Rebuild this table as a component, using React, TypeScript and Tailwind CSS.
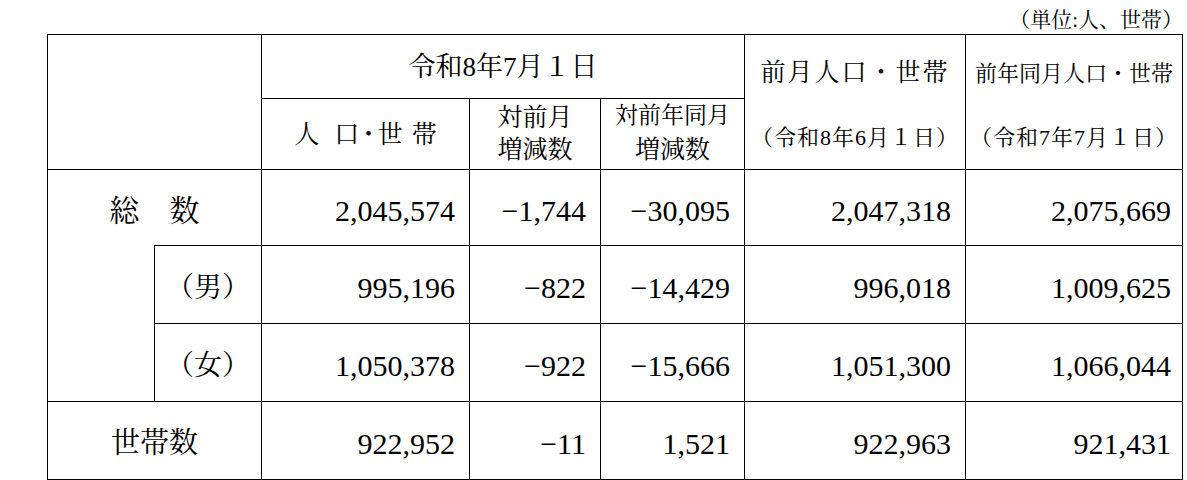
const rows = [
  { label: "総　数", values: ["2,045,574", "−1,744", "−30,095", "2,047,318", "2,075,669"] },
  { label: "（男）", values: ["995,196", "−822", "−14,429", "996,018", "1,009,625"] },
  { label: "（女）", values: ["1,050,378", "−922", "−15,666", "1,051,300", "1,066,044"] },
  { label: "世帯数", values: ["922,952", "−11", "1,521", "922,963", "921,431"] },
];

function Num({ value, last }: { value: string; last: boolean }) {
  return (
    <td className={`border border-black pt-[6px] text-right text-[30px] ${last ? "pr-[11px]" : "pr-[14px]"}`}>
      {value}
    </td>
  );
}

export default function App() {
  const [total, male, female, households] = rows;

  return (
    <div className="w-[1187px] h-[480px] bg-white text-black font-['Liberation_Serif','Noto_Serif_CJK_JP','Noto_Sans_CJK_JP',serif]">
      <div className="ml-[47px] w-[1136px] h-[34px] flex items-end justify-end pb-[1px] text-[21px] leading-[26px]">
        （単位:人、世帯）
      </div>
      <table className="ml-[47px] w-[1136px] table-fixed border-collapse">
        <colgroup>
          <col className="w-[107px]" />
          <col className="w-[107px]" />
          <col className="w-[208px]" />
          <col className="w-[131px]" />
          <col className="w-[144px]" />
          <col className="w-[221px]" />
          <col className="w-[217px]" />
        </colgroup>
        <tbody>
          <tr className="h-[64px]">
            <td rowSpan={2} colSpan={2} className="border border-black" />
            <td colSpan={3} className="border border-black pt-[2px] text-center text-[27px]">
              令和8年7月１日
            </td>
            <td rowSpan={2} className="border border-black p-0 align-top">
              <div className="flex flex-col h-[134px]">
                <div className="flex-1 flex items-center justify-center pt-[6px] text-[25px] tracking-[2px]">
                  前月人口・世帯
                </div>
                <div className="flex-1 flex items-center justify-center text-[22px] tracking-[1px]">
                  （令和8年6月１日）
                </div>
              </div>
            </td>
            <td rowSpan={2} className="border border-black p-0 align-top">
              <div className="flex flex-col h-[134px]">
                <div className="flex-1 flex items-center justify-center pt-[6px] text-[22px]">
                  前年同月人口・世帯
                </div>
                <div className="flex-1 flex items-center justify-center text-[22px] tracking-[1px]">
                  （令和7年7月１日）
                </div>
              </div>
            </td>
          </tr>
          <tr className="h-[71px]">
            <td className="border border-black pt-[2px] text-center text-[25px]">
              <span className="mr-[15px]">人</span>
              <span>口</span>
              <span className="mx-[3px]">･</span>
              <span className="mr-[9px]">世</span>
              <span>帯</span>
            </td>
            <td className="border border-black text-center text-[25px] leading-[32px]">
              対前月
              <br />
              増減数
            </td>
            <td className="border border-black text-center leading-[32px]">
              <span className="text-[23px]">対前年同月</span>
              <br />
              <span className="text-[25px]">増減数</span>
            </td>
          </tr>
          <tr className="h-[76px]">
            <td colSpan={2} className="border border-black border-b-0 pt-[6px] text-center text-[30px]">
              {total.label}
            </td>
            {total.values.map((v, i) => (
              <Num key={i} value={v} last={i === 4} />
            ))}
          </tr>
          <tr className="h-[78px]">
            <td rowSpan={2} className="border border-black border-t-0" />
            <td className="border border-black pt-[6px] text-center text-[28px]">{male.label}</td>
            {male.values.map((v, i) => (
              <Num key={i} value={v} last={i === 4} />
            ))}
          </tr>
          <tr className="h-[78px]">
            <td className="border border-black pt-[6px] text-center text-[28px]">{female.label}</td>
            {female.values.map((v, i) => (
              <Num key={i} value={v} last={i === 4} />
            ))}
          </tr>
          <tr className="h-[78px]">
            <td colSpan={2} className="border border-black pt-[6px] text-center text-[29px]">
              {households.label}
            </td>
            {households.values.map((v, i) => (
              <Num key={i} value={v} last={i === 4} />
            ))}
          </tr>
        </tbody>
      </table>
    </div>
  );
}
